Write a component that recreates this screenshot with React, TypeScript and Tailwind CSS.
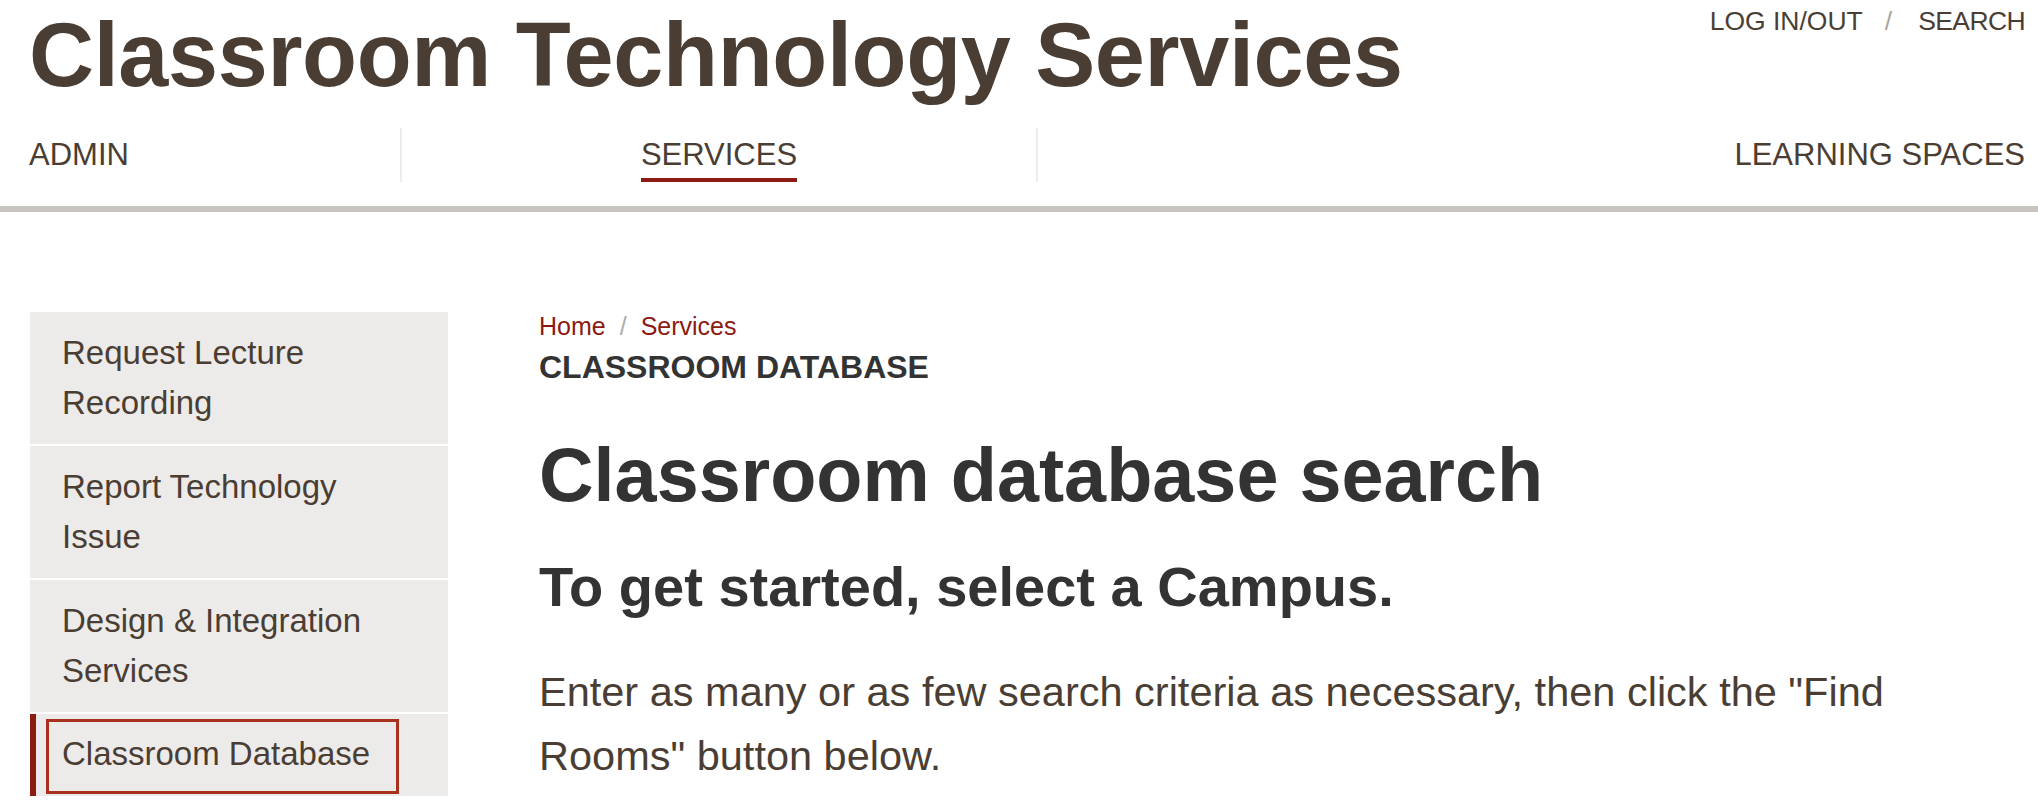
import React from "react";

const brown = "text-[#4a3e34]";

function SideItem({ children }: { children: React.ReactNode }) {
  return (
    <li className="bg-[#edebe9] pl-[32px] pr-[56px] pt-[16px] pb-[16px]">
      <a className={`block text-[33px] leading-[50px] ${brown}`}>{children}</a>
    </li>
  );
}

export default function App() {
  return (
    <div className="w-[2038px] h-[812px] overflow-hidden bg-white font-['Liberation_Sans',Arial,sans-serif]">
      <header>
        <div className="flex items-start justify-between pl-[29px] pr-[13px]">
          <h1 className={`mt-[10px] text-[90px] leading-[90px] font-bold tracking-[-0.35px] ${brown}`}>
            Classroom Technology Services
          </h1>
          <div className={`flex items-center pt-[8px] text-[26.5px] leading-[26px] ${brown}`}>
            <a>LOG IN/OUT</a>
            <span className="ml-[22px] mr-[26px] text-[#aaa59f]">/</span>
            <a className="tracking-[-0.6px]">SEARCH</a>
          </div>
        </div>
        <nav className={`mt-[28px] grid grid-cols-[373px_636px_1fr] pl-[29px] pr-[13px] h-[54px] text-[31px] leading-[31px] ${brown}`}>
          <div className="border-r-2 border-[#ececec] pt-[11px]">
            <a>ADMIN</a>
          </div>
          <div className="border-r-2 border-[#ececec] pt-[11px] flex justify-center">
            <a className="flex flex-col items-stretch">
              <span>SERVICES</span>
              <span className="mt-[8px] h-[4px] bg-[#8e1b13]"></span>
            </a>
          </div>
          <div className="pt-[11px] flex justify-end">
            <a>LEARNING SPACES</a>
          </div>
        </nav>
        <div className="mt-[24px] h-[6px] bg-[#c8c4c0]"></div>
      </header>

      <div className="flex items-start pl-[30px] pt-[100px]">
        <aside className="w-[418px] shrink-0">
          <ul className="flex flex-col gap-[2px]">
            <SideItem>Request Lecture Recording</SideItem>
            <SideItem>Report Technology Issue</SideItem>
            <SideItem>Design &amp; Integration Services</SideItem>
            <li className="bg-[#edebe9] border-l-[6px] border-[#8c1b12] pl-[10px] pt-[5px] pb-[2px]">
              <a className={`block w-[353px] border-[3px] border-[#a8311f] pl-[13px] pt-[7px] pb-[12px] text-[33px] leading-[50px] ${brown}`}>
                Classroom Database
              </a>
            </li>
          </ul>
        </aside>

        <main className="ml-[91px] w-[1400px]">
          <div className="mt-[2px] flex items-center text-[25px] leading-[24px] text-[#8b1a10]">
            <a>Home</a>
            <span className="mx-[14px] text-[#b0aca8]">/</span>
            <a>Services</a>
          </div>
          <div className="mt-[14px] text-[32px] leading-[31px] font-bold text-[#333333]">
            CLASSROOM DATABASE
          </div>
          <h1 className="mt-[54px] text-[75.6px] leading-[76px] font-bold text-[#333333]">
            Classroom database search
          </h1>
          <h2 className="mt-[46px] text-[56px] leading-[56px] font-bold text-[#333333]">
            To get started, select a Campus.
          </h2>
          <p className={`mt-[45px] text-[41.5px] leading-[64px] ${brown}`}>
            Enter as many or as few search criteria as necessary, then click the "Find Rooms" button below.
          </p>
        </main>
      </div>
    </div>
  );
}
